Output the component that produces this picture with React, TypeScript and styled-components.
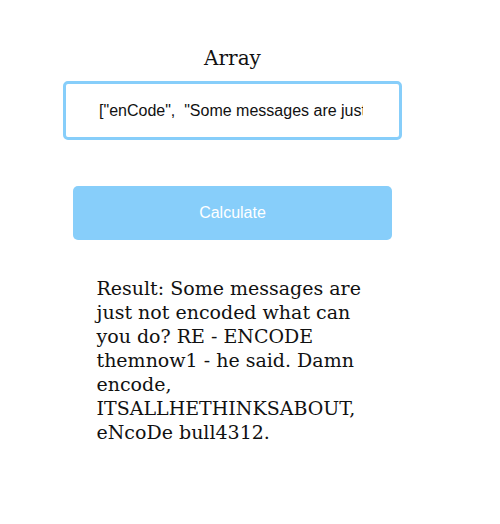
import { useState } from 'react'
import styled, { createGlobalStyle } from 'styled-components'

const GlobalStyle = createGlobalStyle`
  body {
    margin: 8px;
    background: #ffffff;
    font-family: "DejaVu Serif", "Liberation Serif", serif;
  }
`

const skyBlue = '#87cefa'

const Page = styled.div`
  width: 449px;
  display: flex;
  flex-direction: column;
  align-items: center;
  padding-top: 37px;
`

const Label = styled.label`
  font-size: 20px;
  color: #111111;
  line-height: 26px;
  margin-bottom: 10px;
`

const ArrayInput = styled.input`
  box-sizing: border-box;
  width: 339px;
  height: 59px;
  border: 3px solid ${skyBlue};
  border-radius: 5px;
  padding: 0 36px 0 33px;
  font-family: "Liberation Sans", Arial, sans-serif;
  font-size: 16px;
  color: #111111;
  outline: none;
`

const CalcButton = styled.button`
  width: 319px;
  height: 54px;
  margin-top: 46px;
  border: none;
  border-radius: 5px;
  background: ${skyBlue};
  color: #ffffff;
  font-family: "Liberation Sans", Arial, sans-serif;
  font-size: 16px;
  cursor: pointer;
`

const Result = styled.p`
  width: 272px;
  margin: 36px 0 0;
  font-size: 19px;
  line-height: 24px;
  color: #111111;
`

export default function App() {
  const [value, setValue] = useState(
    '["enCode",  "Some messages are just not encoded what can you do?"]'
  )
  return (
    <>
      <GlobalStyle />
      <Page>
        <Label htmlFor="arr">Array</Label>
        <ArrayInput id="arr" value={value} onChange={(e) => setValue(e.target.value)} />
        <CalcButton>Calculate</CalcButton>
        <Result>
          Result: Some messages are just not encoded what can you do? RE - ENCODE themnow1 - he
          said. Damn encode, ITSALLHETHINKSABOUT, eNcoDe bull4312.
        </Result>
      </Page>
    </>
  )
}
